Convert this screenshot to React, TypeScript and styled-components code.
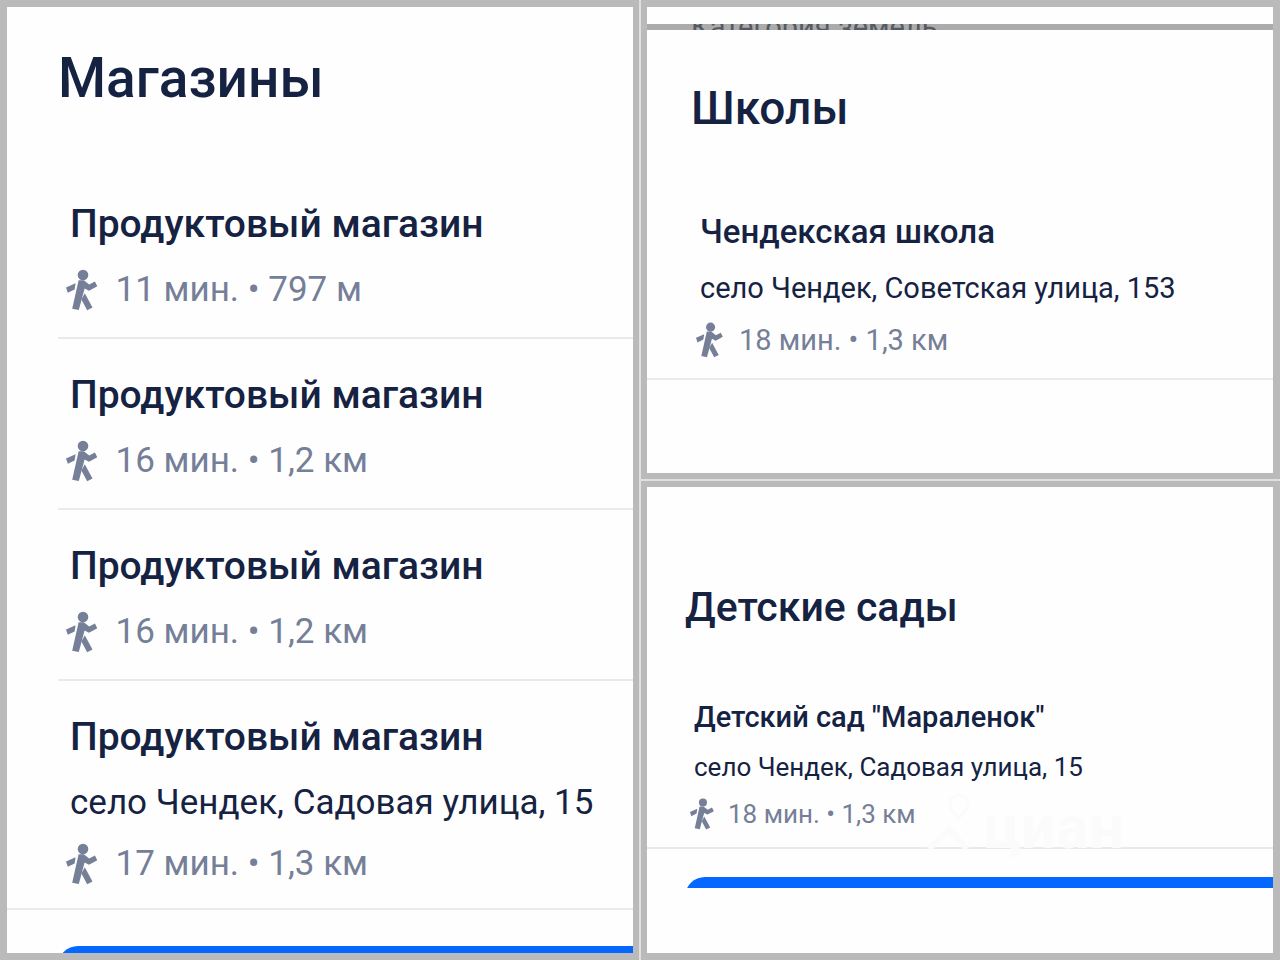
import React from "react";
import styled, { createGlobalStyle } from "styled-components";

const GlobalStyle = createGlobalStyle`
  * { box-sizing: border-box; }
  body { margin: 0; background: #e0e0e0; font-family: Roboto, "Noto Sans", sans-serif; color: #152242; }
  h2, h3, p, ul { margin: 0; padding: 0; }
  ul { list-style: none; }
`;

type Scale = {
  inset: number;
  headTop: number;
  headBottom: number;
  head: number;
  headLine: number;
  textPad: number;
  title: number;
  body: number;
  line: number;
  titleLine: number;
  titleGap: number;
  metaGap: number;
  padTop: number;
  padBottom: number;
  lastPadBottom: number;
  icon: number;
  iconGap: number;
};

const shops: Scale = {
  inset: 51, headTop: 39, headBottom: 58, head: 55, headLine: 64, textPad: 12,
  title: 39, body: 35, line: 40, titleLine: 48, titleGap: 22, metaGap: 21,
  padTop: 32, padBottom: 27, lastPadBottom: 24, icon: 42, iconGap: 18,
};

const schools: Scale = {
  inset: 44, headTop: 50, headBottom: 70, head: 46, headLine: 56, textPad: 9,
  title: 33, body: 29, line: 36, titleLine: 40, titleGap: 18, metaGap: 16,
  padTop: 6, padBottom: 20, lastPadBottom: 20, icon: 36, iconGap: 16,
};

const gardens: Scale = {
  inset: 38, headTop: 96, headBottom: 60, head: 41, headLine: 48, textPad: 9,
  title: 29, body: 26, line: 32, titleLine: 36, titleGap: 16, metaGap: 15,
  padTop: 8, padBottom: 17, lastPadBottom: 17, icon: 32, iconGap: 14,
};

const Page = styled.main`
  display: grid;
  grid-template-columns: 1fr 1fr;
  gap: 2px;
  min-height: 100vh;
`;

const RightColumn = styled.div`
  display: grid;
  grid-template-rows: 1fr 1fr;
  gap: 2px;
  min-width: 0;
`;

const Panel = styled.section<{ $edges: string }>`
  position: relative;
  display: flex;
  flex-direction: column;
  min-width: 0;
  overflow: hidden;
  background: #fefefe;
  border: solid #bababa;
  border-width: ${(p) => p.$edges};
`;

const Heading = styled.h2<{ $s: Scale }>`
  padding: ${(p) => `${p.$s.headTop}px 0 ${p.$s.headBottom}px ${p.$s.inset}px`};
  font-size: ${(p) => p.$s.head}px;
  line-height: ${(p) => p.$s.headLine}px;
  font-weight: 500;
  white-space: nowrap;
`;

const Item = styled.li<{ $s: Scale; $last: boolean }>`
  display: flex;
  flex-direction: column;
  margin-left: ${(p) => (p.$last ? 0 : p.$s.inset)}px;
  padding-top: ${(p) => p.$s.padTop}px;
  padding-bottom: ${(p) => (p.$last ? p.$s.lastPadBottom : p.$s.padBottom)}px;
  padding-left: ${(p) => p.$s.textPad + (p.$last ? p.$s.inset : 0)}px;
  border-bottom: 2px solid #e7ebef;
  white-space: nowrap;
`;

const Title = styled.h3<{ $s: Scale }>`
  font-size: ${(p) => p.$s.title}px;
  line-height: ${(p) => p.$s.titleLine}px;
  font-weight: 500;
  margin-bottom: ${(p) => p.$s.titleGap}px;
`;

const Address = styled.p<{ $s: Scale }>`
  font-size: ${(p) => p.$s.body}px;
  line-height: ${(p) => p.$s.line}px;
  margin-bottom: ${(p) => p.$s.metaGap}px;
`;

const Meta = styled.p<{ $s: Scale }>`
  display: flex;
  align-items: center;
  gap: ${(p) => p.$s.iconGap}px;
  margin-left: -4px;
  font-size: ${(p) => p.$s.body}px;
  line-height: ${(p) => p.$s.line}px;
  height: ${(p) => p.$s.line}px;
  color: #757f98;
`;

const ButtonWindow = styled.div<{ $top: number; $left: number; $height: number }>`
  margin: ${(p) => `${p.$top}px 0 0 ${p.$left}px`};
  height: ${(p) => p.$height}px;
  overflow: hidden;
`;

const BlueButton = styled.button`
  display: block;
  width: 100%;
  height: 72px;
  border: 0;
  border-radius: 20px 0 0 20px;
  background: #0468ff;
`;

const SheetEdge = styled.div`
  flex: none;
  height: 6px;
  margin-top: 17px;
  padding-left: 44px;
  overflow: hidden;
  background: #ababab;
  color: #555a62;
  font-size: 29px;
  line-height: 6px;
  white-space: nowrap;
`;

const Watermark = styled.div`
  position: absolute;
  left: 278px;
  top: 302px;
  display: flex;
  align-items: flex-end;
  gap: 14px;
  color: #fbfbfb;
  font-size: 62px;
  line-height: 60px;
  font-weight: 700;
  pointer-events: none;
`;

const Walker = ({ size }: { size: number }) => (
  <svg width={size * 0.75} height={size} viewBox="0 0 31.5 42" fill="currentColor" aria-hidden="true">
    <circle cx="17" cy="6" r="5.3" />
    <path d="M12.6 11.2H17.8L23.2 15.4L28.9 12.5L31.3 17.3L23 21.8L18.6 19.6L12.8 41L6.2 39.8Z" />
    <path d="M9.6 14.2L8.6 20.4L1.8 23.8L0 18.5Z" />
    <path d="M18.8 24.2L26.5 38.6L21.2 41.2L15.4 30.4Z" />
  </svg>
);

type Place = { title: string; address?: string; meta: string };

const PlaceList = ({ s, places }: { s: Scale; places: Place[] }) => (
  <ul>
    {places.map((p, i) => (
      <Item key={i} $s={s} $last={i === places.length - 1}>
        <Title $s={s}>{p.title}</Title>
        {p.address && <Address $s={s}>{p.address}</Address>}
        <Meta $s={s}>
          <Walker size={s.icon} />
          <span>{p.meta}</span>
        </Meta>
      </Item>
    ))}
  </ul>
);

export default function App() {
  return (
    <>
      <GlobalStyle />
      <Page>
        <Panel $edges="7px 6px 7px 7px">
          <Heading $s={shops}>Магазины</Heading>
          <PlaceList
            s={shops}
            places={[
              { title: "Продуктовый магазин", meta: "11 мин. • 797 м" },
              { title: "Продуктовый магазин", meta: "16 мин. • 1,2 км" },
              { title: "Продуктовый магазин", meta: "16 мин. • 1,2 км" },
              { title: "Продуктовый магазин", address: "село Чендек, Садовая улица, 15", meta: "17 мин. • 1,3 км" },
            ]}
          />
          <ButtonWindow $top={36} $left={51} $height={7}>
            <BlueButton aria-label="Показать" />
          </ButtonWindow>
        </Panel>
        <RightColumn>
          <Panel $edges="7px 7px 6px 6px">
            <SheetEdge>Категория земель</SheetEdge>
            <Heading $s={schools}>Школы</Heading>
            <PlaceList
              s={schools}
              places={[{ title: "Чендекская школа", address: "село Чендек, Советская улица, 153", meta: "18 мин. • 1,3 км" }]}
            />
          </Panel>
          <Panel $edges="6px 7px 7px 6px">
            <Watermark aria-hidden="true">
              <svg width="44" height="68" viewBox="0 0 44 68" fill="none" stroke="currentColor" strokeWidth="3">
                <path d="M34 6a9 9 0 0 1 9 9c0 6-9 14-9 14s-9-8-9-14a9 9 0 0 1 9-9Z" />
                <path d="M4 60L24 40L42 60" strokeWidth="6" />
              </svg>
              <span>циан</span>
            </Watermark>
            <Heading $s={gardens}>Детские сады</Heading>
            <PlaceList
              s={gardens}
              places={[{ title: 'Детский сад "Мараленок"', address: "село Чендек, Садовая улица, 15", meta: "18 мин. • 1,3 км" }]}
            />
            <ButtonWindow $top={28} $left={38} $height={11}>
              <BlueButton aria-label="Показать" />
            </ButtonWindow>
          </Panel>
        </RightColumn>
      </Page>
    </>
  );
}
